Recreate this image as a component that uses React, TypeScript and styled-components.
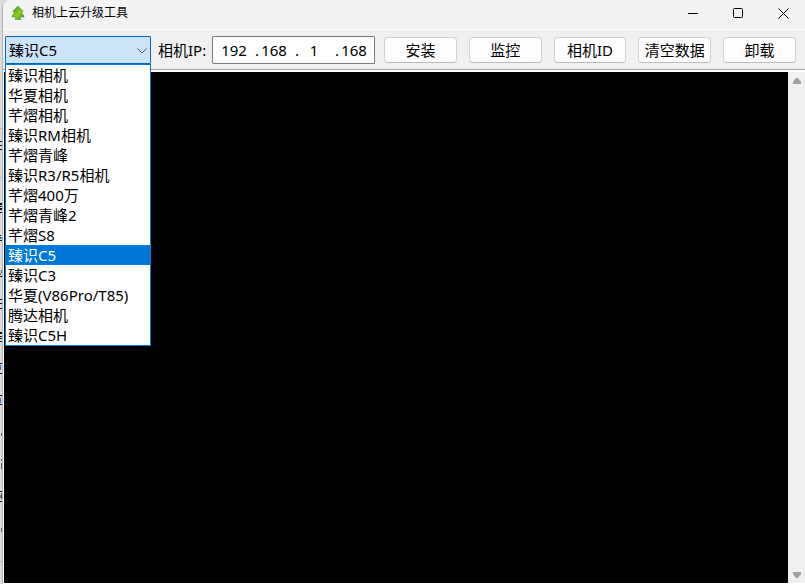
import React, { useState } from 'react';
import styled, { createGlobalStyle } from 'styled-components';

const GlobalStyle = createGlobalStyle`
  * { box-sizing: border-box; }
  html, body, #root { height: 100%; }
  body {
    margin: 0;
    overflow: hidden;
    color: #000;
    font: 15px/20px "Noto Sans", "Noto Sans CJK SC", sans-serif;
  }
  button, input, select { font: inherit; color: inherit; }
`;

const Desktop = styled.div`
  display: flex;
  height: 100%;
  background: #dcdcde;
`;

const Behind = styled.svg`
  flex: none;
  width: 2px;
  height: 584px;
`;

const Window = styled.main`
  flex: 1;
  min-width: 0;
  display: flex;
  flex-direction: column;
  border-left: 1px solid #b4b4b4;
  border-radius: 8px 0 0 2px;
  background: #f0f0f0;
  overflow: hidden;
`;

const TitleBar = styled.header`
  display: flex;
  align-items: center;
  height: 30px;
  padding: 0 0 3px 8px;
  background: #f3f3f3;
  border-bottom: 1px solid #fff;
`;

const Title = styled.h1`
  flex: 1;
  margin: 0 0 0 7px;
  font-size: 12px;
  line-height: 20px;
  font-weight: 400;
`;

const WindowButton = styled.button`
  display: grid;
  place-items: center;
  width: 45px;
  height: 26px;
  padding: 0 0 0 2px;
  border: 0;
  background: none;
`;

const Toolbar = styled.div`
  display: flex;
  align-items: center;
  height: 40px;
  padding: 0 9px 0 2px;
  border-bottom: 1px solid #a0a0a0;
`;

const ModelPicker = styled.div`
  position: relative;
  width: 146px;
`;

const ModelSelect = styled.select`
  display: block;
  appearance: none;
  width: 100%;
  height: 28px;
  padding: 0 20px 0 3px;
  border: 1px solid #0067c0;
  border-radius: 1px;
  background: #cce4f7;
  outline: none;
`;

const Chevron = styled.svg`
  position: absolute;
  top: 12px;
  right: 4px;
  pointer-events: none;
`;

const ModelList = styled.ul`
  position: absolute;
  z-index: 1;
  top: 100%;
  left: 0;
  width: 100%;
  margin: 0;
  padding: 0;
  list-style: none;
  background: #fff;
  border: 1px solid #0078d7;
`;

const ModelOption = styled.button<{ $active: boolean }>`
  display: block;
  width: 100%;
  height: 20px;
  padding: 0 2px;
  border: 0;
  text-align: left;
  line-height: 20px;
  white-space: nowrap;
  color: ${(p) => (p.$active ? '#fff' : '#000')};
  background: ${(p) => (p.$active ? '#0078d7' : '#fff')};
`;

const IpLabel = styled.label`
  width: 54px;
  margin-left: 7px;
  white-space: nowrap;
`;

const IpBox = styled.div`
  display: flex;
  align-items: center;
  height: 28px;
  margin-right: 9px;
  padding: 0 5px 0 6px;
  border: 1px solid #7a7a7a;
  border-radius: 1px;
  background: #fff;
`;

const Octet = styled.input`
  width: 30px;
  height: 20px;
  padding: 0;
  border: 0;
  text-align: center;
  background: none;
  outline: none;
`;

const Dot = styled.span`
  width: 10px;
  text-align: right;
`;

const Actions = styled.div`
  flex: 1;
  display: flex;
  gap: 12px;
`;

const ActionButton = styled.button`
  flex: 1;
  height: 26px;
  padding: 0;
  line-height: 20px;
  white-space: nowrap;
  border: 1px solid #d0d0d0;
  border-bottom-color: #bcbcbc;
  border-radius: 4px;
  background: #fdfdfd;
`;

const Content = styled.div`
  flex: 1;
  min-height: 0;
  display: flex;
  padding: 2px 0 1px 1px;
  background: #fff;
`;

const Console = styled.section`
  flex: 1;
  background: #000;
`;

const ScrollBar = styled.div`
  display: flex;
  flex-direction: column;
  justify-content: space-between;
  width: 17px;
  background: #f0f0f0;
`;

const ScrollButton = styled.button`
  display: grid;
  place-items: center;
  height: 17px;
  padding: 0;
  border: 0;
  background: none;
`;

const models = [
  '臻识相机', '华夏相机', '芊熠相机', '臻识RM相机', '芊熠青峰', '臻识R3/R5相机', '芊熠400万',
  '芊熠青峰2', '芊熠S8', '臻识C5', '臻识C3', '华夏(V86Pro/T85)', '腾达相机', '臻识C5H',
];
const actions = ['安装', '监控', '相机ID', '清空数据', '卸载'];

export default function App() {
  const [model, setModel] = useState('臻识C5');
  const [ip, setIp] = useState(['192', '168', '1', '168']);

  return (
    <>
      <GlobalStyle />
      <Desktop>
        <Behind viewBox="0 0 2 584" shapeRendering="crispEdges" aria-hidden="true">
          <path
            d="M0 141h2v1H0zM0 145h2v1H0zM0 149h2v1H0zM0 203h2v2H0zM0 206h2v1H0zM0 208h2v2H0zM0 212h2v1H0zM0 235h1v1H0zM0 240h2v1H0zM0 276h2v1H0zM0 299h2v1H0zM0 303h2v1H0zM0 308h2v1H0zM0 332h2v2H0zM0 336h2v1H0zM0 338h2v1H0zM0 341h2v1H0zM0 363h2v1H0zM0 373h2v1H0zM0 395h2v1H0zM0 404h2v1H0zM0 491h2v1H0zM0 501h2v1H0z"
            fill="#111"
          />
          <path d="M0 237h2v2H0zM0 273h1v2H0zM0 365h1v5H0zM0 398h1v5H0zM0 495h1v3H0z" fill="#2f7fc8" />
          <path d="M1 270h1v3H1zM1 433h1v3H1zM1 459h1v2H1zM1 463h1v6H1zM1 493h1v6H1zM1 528h1v4H1z" fill="#7a5a48" />
          <path d="M0 177h2v1H0zM0 128h2v1H0zM0 561h2v1H0z" fill="#b8b8bc" />
        </Behind>
        <Window>
          <TitleBar>
            <svg width="14" height="14" viewBox="0 0 14 14" aria-hidden="true">
              <defs>
                <linearGradient id="leaf" x1="0" y1="0" x2="1" y2="1">
                  <stop offset="0" stopColor="#2c8a2a" />
                  <stop offset=".55" stopColor="#8fd01c" />
                  <stop offset="1" stopColor="#2f8c1c" />
                </linearGradient>
              </defs>
              <path d="M7 0L12 5V6H10L13 10V11H9.5V12.5L10 13.5H4L4.500 12.500V11H1V10L4 6H2V5Z" fill="url(#leaf)" stroke="#3c9130" strokeWidth=".5" />
            </svg>
            <Title>相机上云升级工具</Title>
            <WindowButton aria-label="最小化">
              <svg width="11" height="11"><path d="M0 5.5H10" stroke="#000" /></svg>
            </WindowButton>
            <WindowButton aria-label="最大化">
              <svg width="11" height="11"><rect x=".5" y=".5" width="9" height="9" rx="1" fill="none" stroke="#000" /></svg>
            </WindowButton>
            <WindowButton aria-label="关闭">
              <svg width="11" height="11"><path d="M.5 .5L10.5 10.5M10.5 .5L.5 10.5" stroke="#000" /></svg>
            </WindowButton>
          </TitleBar>
          <Toolbar>
            <ModelPicker>
              <ModelSelect aria-label="相机型号" value={model} onChange={(e) => setModel(e.target.value)}>
                {models.map((m) => <option key={m}>{m}</option>)}
              </ModelSelect>
              <Chevron width="10" height="6"><path d="M.5 .5L5 5L9.5 .5" fill="none" stroke="#555" /></Chevron>
              <ModelList>
                {models.map((m) => (
                  <li key={m}>
                    <ModelOption $active={m === model} onClick={() => setModel(m)}>{m}</ModelOption>
                  </li>
                ))}
              </ModelList>
            </ModelPicker>
            <IpLabel htmlFor="ip-0">相机IP:</IpLabel>
            <IpBox>
              {ip.map((part, i) => (
                <React.Fragment key={i}>
                  {i > 0 && <Dot>.</Dot>}
                  <Octet
                    id={`ip-${i}`}
                    aria-label={`相机IP ${i + 1}`}
                    maxLength={3}
                    value={part}
                    onChange={(e) => setIp(ip.map((v, n) => (n === i ? e.target.value : v)))}
                  />
                </React.Fragment>
              ))}
            </IpBox>
            <Actions>
              {actions.map((a) => <ActionButton key={a}>{a}</ActionButton>)}
            </Actions>
          </Toolbar>
          <Content>
            <Console aria-label="输出" />
            <ScrollBar>
              <ScrollButton aria-label="向上滚动">
                <svg width="8" height="6"><path d="M3 0H5L8 4V6H0V4Z" fill="#a0a0a0" /></svg>
              </ScrollButton>
              <ScrollButton aria-label="向下滚动">
                <svg width="8" height="6"><path d="M0 0H8V2L5 6H3L0 2Z" fill="#a0a0a0" /></svg>
              </ScrollButton>
            </ScrollBar>
          </Content>
        </Window>
      </Desktop>
    </>
  );
}
